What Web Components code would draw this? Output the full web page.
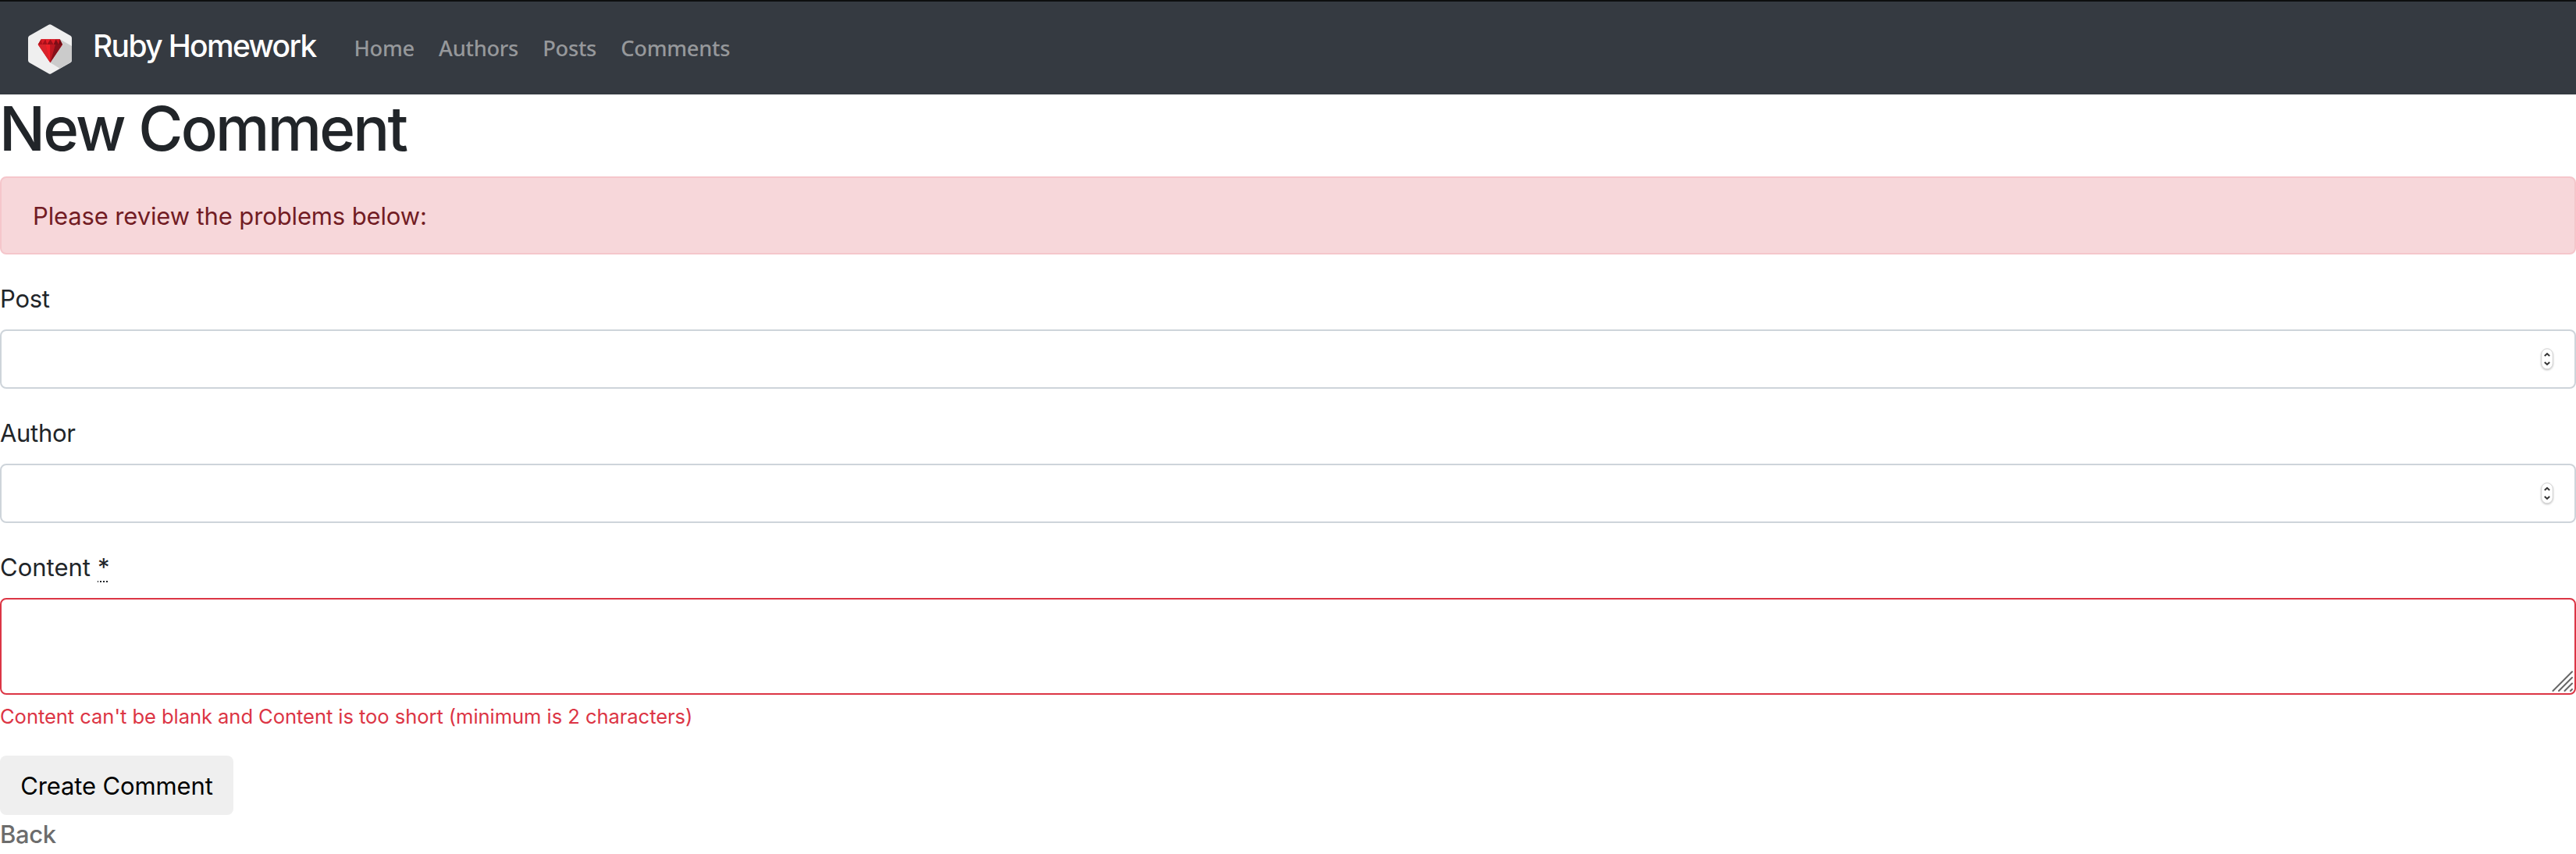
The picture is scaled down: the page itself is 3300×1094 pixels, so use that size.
<!DOCTYPE html>
<html lang="en">
<head>
<meta charset="utf-8">
<title>Ruby Homework</title>
<style>
body{margin:0;background:#fff;color:#212529;font-family:Inter,"Liberation Sans",sans-serif;font-size:31px;letter-spacing:-.13px}
</style>
</head>
<body>
<app-navbar>
  <span slot="brand">Ruby Homework</span>
  <nav-link>Home</nav-link><nav-link>Authors</nav-link><nav-link>Posts</nav-link><nav-link>Comments</nav-link>
</app-navbar>
<page-title>New Comment</page-title>
<alert-box>Please review the problems below:</alert-box>
<number-field style="letter-spacing:-.25px">Post</number-field>
<number-field style="letter-spacing:-.3px">Author</number-field>
<text-field error="Content can't be blank and Content is too short (minimum is 2 characters)">Content</text-field>
<submit-button>Create Comment</submit-button>
<back-link>Back</back-link>
<script>
const define = (name, html, setup) => customElements.define(name, class extends HTMLElement {
  constructor() {
    super();
    this.attachShadow({mode: 'open'}).innerHTML = html;
  }
  connectedCallback() { if (setup) setup(this, this.shadowRoot); }
});

define('ruby-logo', `<style>:host{display:block;width:56px;height:64px}svg{display:block}</style>
<svg width="56" height="64" viewBox="36 33 168 192">
  <defs><clipPath id="hex"><path d="M115 35Q120 32 125 35L199 77Q204 80 204 86V172Q204 178 199 181L125 223Q120 226 115 223L41 181Q36 178 36 172V86Q36 80 41 77Z"/></clipPath></defs>
  <g clip-path="url(#hex)">
    <rect x="36" y="33" width="168" height="192" fill="#efefef"/>
    <path d="M158 91L204 117V177L158 203L121 181Z" fill="#cbcbcb"/>
  </g>
  <path d="M86 91H158L168 111L121 181L74 111Z" fill="#c9161f"/>
  <path d="M74 111H103L121 181Z" fill="#d8232b"/>
  <path d="M103 111H121V181Z" fill="#ee2028"/>
  <path d="M121 111H141L121 181Z" fill="#bd1621"/>
  <path d="M141 111H168L121 181Z" fill="#85101a"/>
  <path d="M86 91L74 111H91Z" fill="#b3121b"/>
  <path d="M86 91H103L91 111Z" fill="#d81d26"/>
  <path d="M103 91L91 111H109Z" fill="#a8101a"/>
  <path d="M103 91H122L109 111Z" fill="#e41e27"/>
  <path d="M122 91L109 111H134Z" fill="#98101a"/>
  <path d="M122 91H143L134 111Z" fill="#d81d26"/>
  <path d="M143 91L134 111H154Z" fill="#7b0d16"/>
  <path d="M143 91H158L154 111Z" fill="#c5161f"/>
  <path d="M158 91L168 111H154Z" fill="#6b0b13"/>
</svg>`);

define('nav-link', `<style>:host{display:block;font:500 27.3px/31px "Noto Sans",sans-serif;letter-spacing:-.3px;color:#96989b}a{color:inherit}</style><a><slot></slot></a>`);

define('app-navbar', `<style>
:host{display:block}
header{display:flex;align-items:center;box-sizing:border-box;height:121px;padding:0 36px;border-top:2px solid #0d0e0f;background:#353a41}
ruby-logo{margin-top:3px}
.brand{box-sizing:border-box;width:361.5px;padding-left:27px;margin-bottom:6px;font-size:39px;font-weight:500;line-height:47px;letter-spacing:-1.65px;color:#fff;white-space:nowrap}
nav{display:flex;gap:31.2px}
</style>
<header><ruby-logo></ruby-logo><div class="brand"><slot name="brand"></slot></div><nav><slot></slot></nav></header>`);

define('page-title', `<style>:host{display:block;height:89px;margin-bottom:16px}h1{margin:0 0 0 -1px;font-size:78px;font-weight:500;line-height:87px;letter-spacing:-2.7px}</style><h1><slot></slot></h1>`);

define('alert-box', `<style>:host{display:block;box-sizing:border-box;height:100px;margin-bottom:32px;padding:25px 40px 24px;border:2px solid #f5c6cb;border-radius:8px;background:#f7d7da;color:#721c24;line-height:47px}</style><slot></slot>`);

define('number-field', `<style>
:host{display:block;margin-bottom:32px}
label{display:block;padding-top:1px;margin-bottom:16px;line-height:47px}
.control{display:flex;align-items:center;box-sizing:border-box;height:76px;padding:0 27px 0 26px;border:2px solid #ced4da;border-radius:8px;background:#fff}
input{flex:1;min-width:0;border:0;padding:0;outline:0;background:none;font:inherit;color:#495057}
svg{display:block;margin-top:-1px;overflow:visible;filter:drop-shadow(0 1px 1px rgba(0,0,0,.25))}
</style>
<label for="value"><slot></slot></label>
<div class="control"><input id="value" inputmode="numeric"><svg width="16" height="28" viewBox="0 0 16 28"><rect x=".75" y=".75" width="14.5" height="26" rx="7.25" fill="#fff" stroke="#d5d5d5"/><path d="M4.8 10L8 7L11.2 10M4.8 18L8 21L11.2 18" fill="none" stroke="#333" stroke-width="2"/></svg></div>`);

define('text-field', `<style>
:host{display:block;margin-bottom:32px;letter-spacing:0}
label{display:flex;padding-top:1px;margin-bottom:16px;line-height:47px}
.required{display:flex;flex-direction:column;width:13px;height:47px;margin-left:9px}
abbr{height:41px;text-decoration:none}
.dots{display:block}
.control{display:flex;align-items:flex-end;box-sizing:border-box;height:124px;border:2px solid #dc3545;border-radius:8px;background:#fff}
textarea{flex:1;box-sizing:border-box;height:120px;border:0;padding:12px 24px;outline:0;resize:none;background:none;font:inherit}
.grip{display:block;margin:0 2px 2px 0}
.error{margin-top:8px;padding-top:1px;height:37.4px;font-size:25.6px;line-height:37px;letter-spacing:-.08px;color:#dc3545}
</style>
<label for="value"><slot></slot><span class="required"><abbr title="required">*</abbr><svg class="dots" width="14" height="2" shape-rendering="crispEdges"><path d="M0 1H1M3 1H5M7 1H9M11 1H13" stroke="#212529" stroke-width="2"/></svg></span></label>
<div class="control"><textarea id="value"></textarea><svg class="grip" width="27" height="27" viewBox="0 0 27 27"><path d="M1.5 26L26 1.5M9 26L26 9M16.5 26L26 16.5M24 26L26 24" fill="none" stroke="#666" stroke-width="2" stroke-linecap="round"/></svg></div>
<div class="error"></div>`, (host, root) => { root.querySelector('.error').textContent = host.getAttribute('error'); });

define('submit-button', `<style>:host{display:block;height:75.6px}button{display:block;box-sizing:border-box;width:299px;height:76px;padding:1px 0 0;border:0;border-radius:8px;background:#efefef;color:#000;font:inherit;letter-spacing:inherit;line-height:47px}</style><button type="button"><slot></slot></button>`);

define('back-link', `<style>:host{display:block;padding-top:1px;line-height:47px;font-weight:450;letter-spacing:-.4px;color:#6c6c6c}</style><a><slot></slot></a>`);
</script>
</body>
</html>
